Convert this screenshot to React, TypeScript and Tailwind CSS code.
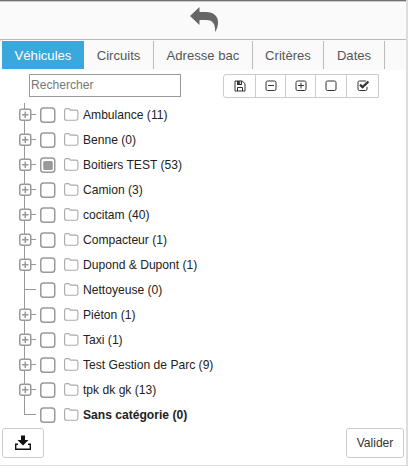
import React from "react";

const tabs = [
  { label: "Véhicules", width: "w-[82px]" },
  { label: "Circuits", width: "w-[70px]" },
  { label: "Adresse bac", width: "w-[99px]" },
  { label: "Critères", width: "w-[71px]" },
  { label: "Dates", width: "w-[61px]" },
];

type Row = { label: string; leaf?: boolean; partial?: boolean; bold?: boolean };

const rows: Row[] = [
  { label: "Ambulance (11)" },
  { label: "Benne (0)" },
  { label: "Boitiers TEST (53)", partial: true },
  { label: "Camion (3)" },
  { label: "cocitam (40)" },
  { label: "Compacteur (1)" },
  { label: "Dupond & Dupont (1)" },
  { label: "Nettoyeuse (0)", leaf: true },
  { label: "Piéton (1)" },
  { label: "Taxi (1)" },
  { label: "Test Gestion de Parc (9)" },
  { label: "tpk dk gk (13)" },
  { label: "Sans catégorie (0)", leaf: true, bold: true },
];

function Branch({ leaf, first, last }: { leaf?: boolean; first: boolean; last: boolean }) {
  return (
    <svg width="18" height="25" viewBox="0 0 18 25" fill="none" stroke="#999" className="shrink-0">
      <path d={last ? "M5.5 0V12.5" : first ? "M5.5 1V25" : "M5.5 0V25"} />
      <path d="M5 12.5H17" />
      {!leaf && (
        <>
          <rect x="0.75" y="7.25" width="11" height="11" rx="2" fill="#fff" strokeWidth="1.5" />
          <path d="M3 12.75H9.5M6.25 9.5V16" strokeWidth="1.5" />
        </>
      )}
    </svg>
  );
}

function Check({ partial }: { partial?: boolean }) {
  return (
    <svg width="16" height="25" viewBox="0 0 16 25" fill="none" className="ml-[3px] shrink-0">
      <rect x="0.75" y="6" width="14" height="14.2" rx="2.8" stroke="#999" strokeWidth="1.5" />
      {partial && <rect x="3.2" y="9" width="9.6" height="9" rx="1.5" fill="#999" />}
    </svg>
  );
}

function Folder() {
  return (
    <svg width="15" height="25" viewBox="0 0 15 25" fill="none" className="ml-2 shrink-0">
      <path
        d="M.6 16.6V8.5Q.6 6.6 2.4 6.6H4.3Q5.7 6.6 6.2 8.1H12.1Q13.9 8.1 13.9 9.8V16.6Q13.9 18.2 12.1 18.2H2.4Q.6 18.2.6 16.6Z"
        stroke="#aaa"
        strokeWidth="1.1"
      />
    </svg>
  );
}

function ToolIcon({ kind }: { kind: string }) {
  return (
    <svg width="12" height="12" viewBox="0 0 12 12" fill="none" stroke="#333">
      {kind === "save" && (
        <>
          <path d="M1 1H8.2L11 3.8V11H1Z" />
          <path d="M3.5 11V7.5H8.5V11" />
          <path d="M3 1V5H8V1Z" fill="#333" stroke="none" />
          <path d="M6.3 1.5V4" stroke="#fff" />
        </>
      )}
      {(kind === "minus" || kind === "plus" || kind === "empty") && (
        <rect x="1" y="1" width="10" height="9.5" rx="1.5" />
      )}
      {(kind === "minus" || kind === "plus") && <path d="M3 5.5H9" />}
      {kind === "plus" && <path d="M6 2.8V8.5" />}
      {kind === "checked" && (
        <>
          <path d="M9.2 1H2.5Q1 1 1 2.5V9Q1 10.5 2.5 10.5H8.5Q10 10.5 10 9V6.8" />
          <path d="M3 4.6L5.5 7.1L11.5 1.5" strokeWidth="2.2" />
        </>
      )}
    </svg>
  );
}

const tools = [
  { kind: "save", width: "w-[32px]" },
  { kind: "minus", width: "w-[30px]" },
  { kind: "plus", width: "w-[30px]" },
  { kind: "empty", width: "w-[31px]" },
  { kind: "checked", width: "w-[31px]" },
];

export default function App() {
  return (
    <main className="flex h-[466px] w-[408px] flex-col overflow-hidden border-r-2 border-b border-r-[#ddd] border-b-[#ddd] bg-white font-['Liberation_Sans',Arial,sans-serif] text-[12.1px] text-[#222]">
      <header className="flex h-10 shrink-0 justify-center border-t border-b border-t-[#707070] border-b-[#bbb] bg-[#fafafa] shadow-[inset_0_1px_0_#ccc]">
        <svg width="28" height="26" viewBox="0 0 28 26" fill="#666" className="mt-[6px] ml-[2px]">
          <path d="M0 9L9.5 0V5H16C24 5 28 9.5 28 15.5C28 19 27 22 25.2 25C25.3 16 22.5 13 16 13H9.5V18Z" />
        </svg>
      </header>

      <nav className="flex h-[30px] shrink-0 bg-[#fafafa] pt-px pb-px pl-[2px] text-[13.1px] text-[#555]">
        {tabs.map((tab, i) => (
          <button
            key={tab.label}
            className={`${tab.width} h-[28px] shrink-0 text-center leading-[29px] ${
              i === 0 ? "bg-[#3ba8dd] text-white" : "border-r border-[#bbb]"
            }`}
          >
            {tab.label}
          </button>
        ))}
      </nav>

      <div className="flex h-8 shrink-0 pt-1 pl-[29px]">
        <input
          placeholder="Rechercher"
          className="h-[23px] w-[152px] border border-[#999] px-px pb-[2px] text-[12.1px] placeholder:text-[#777]"
        />
        <div className="ml-[42px] flex h-6 rounded-l-[3px] border border-[#ccc]">
          {tools.map((tool, i) => (
            <button
              key={tool.kind}
              className={`${tool.width} flex items-center justify-center ${i < 4 ? "border-r border-[#ccc]" : ""}`}
            >
              <ToolIcon kind={tool.kind} />
            </button>
          ))}
        </div>
      </div>

      <ul className="shrink-0 pl-[19px]">
        {rows.map((row, i) => (
          <li key={row.label} className="flex h-[25px]">
            <Branch leaf={row.leaf} first={i === 0} last={i === rows.length - 1} />
            <Check partial={row.partial} />
            <Folder />
            <span className={`ml-1 leading-[26px] ${row.bold ? "font-bold" : ""}`}>{row.label}</span>
          </li>
        ))}
      </ul>

      <footer className="mt-px flex shrink-0 justify-between pr-[2px] pl-[2px]">
        <button className="flex h-[30px] w-[42px] items-center justify-center rounded-[3px] border border-[#ccc]">
          <svg width="16" height="16" viewBox="0 0 16 16" fill="#111">
            <path d="M6 .5H10V5H13.5L8 10.5L2.5 5H6Z" />
            <path d="M0 8.5H3V10H1.4V13.5H14.6V10H13V8.5H16V15H0Z" />
          </svg>
        </button>
        <button className="h-[30px] w-[58px] rounded-[3px] border border-[#ccc] text-[#333]">Valider</button>
      </footer>
    </main>
  );
}
